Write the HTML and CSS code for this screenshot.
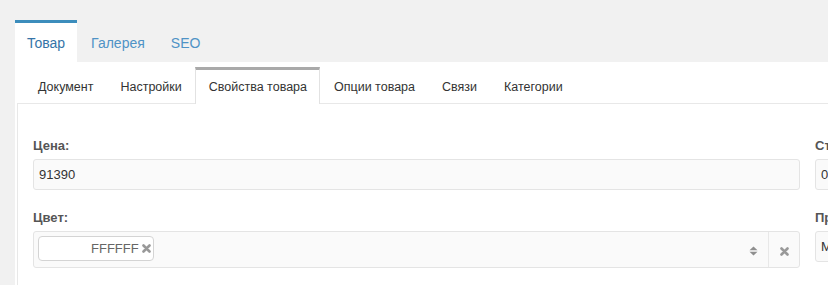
FILE: index.html
```html
<!DOCTYPE html>
<html lang="ru">
<head>
  <meta charset="UTF-8" />
  <title>Товар</title>
  <link rel="stylesheet" href="styles.css">
</head>
<body>
  <div class="page">
    <ul class="tabs-main">
      <li class="active"><a href="#">Товар</a></li>
      <li><a href="#">Галерея</a></li>
      <li><a href="#">SEO</a></li>
    </ul>

    <div class="main-pane">
      <ul class="tabs-sub">
        <li><a href="#">Документ</a></li>
        <li><a href="#">Настройки</a></li>
        <li class="active"><a href="#">Свойства товара</a></li>
        <li><a href="#">Опции товара</a></li>
        <li><a href="#">Связи</a></li>
        <li><a href="#">Категории</a></li>
      </ul>

      <div class="sub-pane">
        <div class="form-row">
          <div class="col">
            <div class="form-group">
              <label>Цена:</label>
              <input class="field" type="text" value="91390" />
            </div>
            <div class="form-group">
              <label>Цвет:</label>
              <div class="select-box">
                <div class="tags">
                  <span class="tag">
                    <span class="swatch"></span>
                    <span class="tag-text">FFFFFF</span>
                    <svg class="tag-x" width="9" height="9" viewBox="0 0 9 9"><path d="M1.5 1.5 L7.5 7.5 M7.5 1.5 L1.5 7.5" stroke="#999" stroke-width="2.6" stroke-linecap="round"/></svg>
                  </span>
                </div>
                <div class="arrows">
                  <svg width="9" height="10" viewBox="0 0 9 10"><path d="M0.5 4.2 L4.5 0.5 L8.5 4.2 Z M0.5 5.8 L4.5 9.5 L8.5 5.8 Z" fill="#8f8f8f"/></svg>
                </div>
                <div class="clear">
                  <svg width="9" height="9" viewBox="0 0 9 9"><path d="M1.5 1.5 L7.5 7.5 M7.5 1.5 L1.5 7.5" stroke="#999" stroke-width="2.6" stroke-linecap="round"/></svg>
                </div>
              </div>
            </div>
          </div>
          <div class="col">
            <div class="form-group">
              <label>Старая цена:</label>
              <input class="field" type="text" value="0" />
            </div>
            <div class="form-group">
              <label>Производитель:</label>
              <input class="field" type="text" value="Модель" />
            </div>
            <div class="form-group">
              <label>Наличие:</label>
              <input class="field" type="text" value="" />
            </div>
          </div>
        </div>
      </div>
    </div>
  </div>
</body>
</html>
```

FILE: styles.css
```css
/* Base */
body {
  margin: 0;
  background: #f1f1f1;
  font-family: "Liberation Sans", Arial, sans-serif;
  color: #333;
  overflow: hidden;
}

.page {
  padding: 20px 0 0 15px;
  width: 1300px;
}

ul {
  list-style: none;
  margin: 0;
  padding: 0;
}

a {
  text-decoration: none;
}

/* Top tabs */
.tabs-main {
  display: flex;
  gap: 2px;
}
.tabs-main li a {
  display: block;
  padding: 10px 12px 9px;
  font-size: 14px;
  line-height: 20px;
  color: #4f93c6;
  border-top: 3px solid transparent;
}
.tabs-main li.active a {
  background: #fff;
  color: #3574a8;
  border-top-color: #3c8dbc;
}

/* Main pane */
.main-pane {
  background: #fff;
  padding-top: 5px;
}

/* Sub tabs */
.tabs-sub {
  display: flex;
  margin-left: 2px;
  padding-left: 7px;
  border-bottom: 1px solid #e8e8e8;
}
.tabs-sub li {
  margin-bottom: -1px;
}
.tabs-sub li a {
  display: block;
  height: 18px;
  padding: 8px 12px 8px 13px;
  font-size: 12.5px;
  line-height: 18px;
  color: #333;
  border: 1px solid transparent;
  border-top: 3px solid transparent;
  border-bottom: none;
}
.tabs-sub li.active a {
  background: #fff;
  border-color: #e2e2e2;
  border-top-color: #a9a9a9;
}

.sub-pane {
  margin-left: 2px;
  border-left: 1px solid #e8e8e8;
  padding: 33px 15px 20px;
}

/* Form */
.form-row {
  display: grid;
  grid-template-columns: 767px 380px;
  column-gap: 15px;
}

.form-group {
  margin-bottom: 19px;
}
.form-group label {
  display: block;
  font-size: 13px;
  line-height: 18px;
  font-weight: 700;
  color: #555;
  margin-bottom: 4px;
}

.field {
  display: block;
  width: 100%;
  box-sizing: border-box;
  border: 1px solid #e4e4e4;
  border-radius: 3px;
  background: #fafafa;
  padding: 6px 5px;
  font-family: inherit;
  font-size: 13px;
  line-height: 17px;
  color: #333;
}

/* Select2-like box */
.select-box {
  display: flex;
  border: 1px solid #e4e4e4;
  border-radius: 3px;
  background: #fafafa;
  height: 35px;
}
.tags {
  flex: 1;
  padding: 4px;
  display: flex;
  align-items: flex-start;
}
.tag {
  display: flex;
  align-items: center;
  height: 23px;
  border: 1px solid #d4d4d4;
  border-radius: 4px;
  background: #fff;
  padding: 0 2px 0 4px;
  font-size: 13px;
  color: #666;
}
.swatch {
  width: 48px;
  height: 16px;
  background: #fff;
}
.tag-text {
  margin-right: 3px;
}
.arrows {
  display: flex;
  align-items: center;
  padding: 3px 10px 0 0;
}
.clear {
  width: 30px;
  border-left: 1px solid #e8e8e8;
  display: flex;
  align-items: center;
  justify-content: center;
  padding-top: 4px;
}
```
